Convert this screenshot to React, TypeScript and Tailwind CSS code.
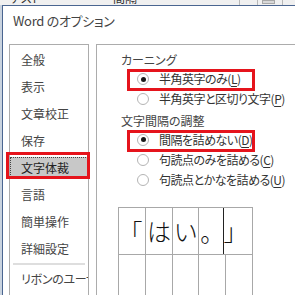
import React from 'react';

const font = {
  fontFamily: '"Noto Sans CJK JP", "Noto Sans", "Liberation Sans", sans-serif',
};

const navItems = ['全般', '表示', '文章校正', '保存', '文字体裁', '言語', '簡単操作', '詳細設定'];

function Radio({ checked }: { checked?: boolean }) {
  return (
    <span className="w-[12px] h-[12px] rounded-full border border-[#b4b4b4] bg-white flex items-center justify-center shrink-0">
      {checked && <span className="w-[5px] h-[5px] rounded-full bg-[#1a1a1a]" />}
    </span>
  );
}

function Option({ label, keyChar, checked, marked }: { label: string; keyChar: string; checked?: boolean; marked?: boolean }) {
  return (
    <div className="relative h-[22px] flex items-center gap-[10px] pl-[16px]">
      <Radio checked={checked} />
      <span className="text-[12px] tracking-[-0.5px] text-[#333] whitespace-nowrap">
        {label}(<span className="underline underline-offset-2">{keyChar}</span>)
      </span>
      {marked && (
        <div className="absolute left-[6px] top-0 w-[128px] h-[22px] border-[3px] border-[#e5141c]" />
      )}
    </div>
  );
}

export default function App() {
  return (
    <div
      className="relative w-[295px] h-[295px] overflow-hidden bg-[#f0f0f0] flex flex-col [font-feature-settings:'palt']"
      style={font}
    >
      {/* Word window behind the dialog */}
      <div className="h-[5px] overflow-hidden flex items-start text-[12px] text-[#333] shrink-0">
        <span className="ml-[10px] -mt-[11px]">テスト</span>
        <span className="ml-[72px] -mt-[11px]">間隔</span>
        <span className="ml-auto w-px h-[5px] bg-[#b8b8b8]" />
        <span className="ml-[17px] w-px h-[5px] bg-[#b8b8b8]" />
        <span className="ml-[4px] w-[13px] h-[4px] bg-[#d8d8d8] border border-[#a8a8a8]" />
        <span className="ml-[7px] w-px h-[5px] bg-[#b8b8b8]" />
        <span className="w-[12px]" />
      </div>

      <div className="flex-1 flex min-h-0">
        <div className="w-[2px] bg-[#c9d3df]" />
        <div className="flex-1 bg-white border-t border-l border-[#4a6590] flex flex-col min-h-0">
          {/* Title */}
          <div className="h-[30px] mb-[8px] pl-[10px] flex items-center text-[13px] tracking-[-0.3px] text-[#444] shrink-0">
            Word のオプション
          </div>

          <div className="flex-1 flex gap-[7px] pl-[6px] min-h-0">
            {/* Left navigation */}
            <div className="w-[80px] border border-b-0 border-[#acacac] pt-[1px] flex flex-col shrink-0 overflow-hidden">
              {navItems.map((item) =>
                item === '文字体裁' ? (
                  <div key={item} className="relative h-[27px] flex items-center">
                    <div className="w-full h-[22px] bg-[#c8c8c8] border border-dotted border-[#444] flex items-center pl-[10px] text-[12px] text-[#222]">
                      {item}
                    </div>
                  </div>
                ) : (
                  <div key={item} className="h-[27px] flex items-center pl-[11px] text-[12px] text-[#444]">
                    {item}
                  </div>
                )
              )}
              <div className="mx-[3px] h-[2px] bg-[#dedede] mt-[1px]" />
              <div className="h-[27px] flex items-center pl-[11px] text-[12px] tracking-[-0.3px] text-[#444] whitespace-nowrap">
                リボンのユーサ
              </div>
            </div>

            {/* Right content */}
            <div className="flex-1 border-t border-l border-[#acacac] pt-[6px] pl-[24px] flex flex-col min-w-0">
              <div className="h-[20px] flex items-center text-[12px] text-[#444]">カーニング</div>
              <Option label="半角英字のみ" keyChar="L" checked marked />
              <Option label="半角英字と区切り文字" keyChar="P" />
              <div className="h-[20px] mt-[2px] flex items-center text-[12px] text-[#444]">文字間隔の調整</div>
              <Option label="間隔を詰めない" keyChar="D" checked marked />
              <Option label="句読点のみを詰める" keyChar="C" />
              <Option label="句読点とかなを詰める" keyChar="U" />

              {/* Preview grid */}
              <div className="-ml-[3px] mt-[17px] w-[135px] border-t border-[#a8a8a8]">
                <div className="grid grid-cols-[27px_27px_26px_27px_28px] h-[47px] border-b border-[#a8a8a8] text-[24px] font-light text-[#111] leading-none">
                  <div className="border-l border-[#a8a8a8] flex items-center justify-end pr-[3px]">「</div>
                  <div className="border-l border-[#a8a8a8] flex items-center justify-center">は</div>
                  <div className="border-l border-[#a8a8a8] flex items-center justify-center">い</div>
                  <div className="border-l border-[#a8a8a8] flex items-end justify-start pl-[1px] pb-[10px]">。</div>
                  <div className="border-l border-r border-l-[#222] border-r-[#a8a8a8] flex items-center justify-start -ml-[2px]">
                    」
                  </div>
                </div>
                <div className="grid grid-cols-[27px_27px_26px_27px_28px] h-[40px]">
                  <div className="border-l border-[#a8a8a8]" />
                  <div className="border-l border-[#a8a8a8]" />
                  <div className="border-l border-[#a8a8a8]" />
                  <div className="border-l border-[#a8a8a8]" />
                  <div className="border-l border-r border-[#a8a8a8]" />
                </div>
              </div>
            </div>
          </div>
        </div>
      </div>

      {/* Annotation box around the selected nav item */}
      <div className="absolute left-[6px] top-[152px] w-[84px] h-[27px] border-[3px] border-[#e5141c]" />
    </div>
  );
}
